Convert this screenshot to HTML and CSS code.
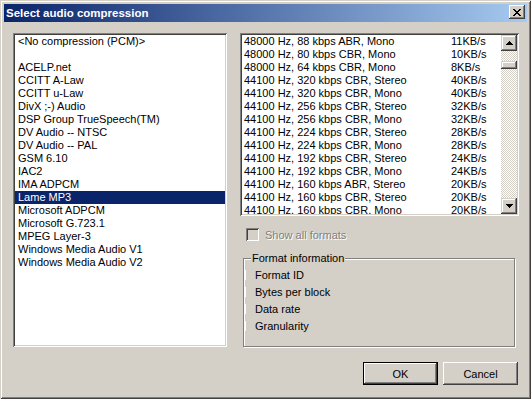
FILE: index.html
```html
<!DOCTYPE html>
<html lang="en">
<head>
    <meta charset="UTF-8">
    <title>Select audio compression</title>
    <link rel="stylesheet" href="styles.css">
</head>
<body>
    <div class="window">
        <div class="titlebar">
            <span class="title">Select audio compression</span>
            <button class="close-btn" aria-label="Close">
                <svg width="8" height="7" viewBox="0 0 8 7" shape-rendering="crispEdges">
                    <path d="M0 0h2v1h1v1h2v-1h1v-1h2v1h-1v1h-1v1h-1v1h1v1h1v1h1v1h-2v-1h-1v-1h-2v1h-1v1h-2v-1h1v-1h1v-1h1v-1h-1v-1h-1v-1h-1z" fill="#000"/>
                </svg>
            </button>
        </div>

        <div class="client">
            <div class="main">
                <!-- codec list -->
                <div class="listbox codecs">
                    <div class="item">&lt;No compression (PCM)&gt;</div>
                    <div class="item"></div>
                    <div class="item">ACELP.net</div>
                    <div class="item">CCITT A-Law</div>
                    <div class="item">CCITT u-Law</div>
                    <div class="item">DivX ;-) Audio</div>
                    <div class="item">DSP Group TrueSpeech(TM)</div>
                    <div class="item">DV Audio -- NTSC</div>
                    <div class="item">DV Audio -- PAL</div>
                    <div class="item">GSM 6.10</div>
                    <div class="item">IAC2</div>
                    <div class="item">IMA ADPCM</div>
                    <div class="item selected">Lame MP3</div>
                    <div class="item">Microsoft ADPCM</div>
                    <div class="item">Microsoft G.723.1</div>
                    <div class="item">MPEG Layer-3</div>
                    <div class="item">Windows Media Audio V1</div>
                    <div class="item">Windows Media Audio V2</div>
                </div>

                <div class="side">
                    <!-- format list -->
                    <div class="listbox formats">
                        <div class="rows">
                            <div class="row"><span>48000 Hz, 88 kbps ABR, Mono</span><span>11KB/s</span></div>
                            <div class="row"><span>48000 Hz, 80 kbps CBR, Mono</span><span>10KB/s</span></div>
                            <div class="row"><span>48000 Hz, 64 kbps CBR, Mono</span><span>8KB/s</span></div>
                            <div class="row"><span>44100 Hz, 320 kbps CBR, Stereo</span><span>40KB/s</span></div>
                            <div class="row"><span>44100 Hz, 320 kbps CBR, Mono</span><span>40KB/s</span></div>
                            <div class="row"><span>44100 Hz, 256 kbps CBR, Stereo</span><span>32KB/s</span></div>
                            <div class="row"><span>44100 Hz, 256 kbps CBR, Mono</span><span>32KB/s</span></div>
                            <div class="row"><span>44100 Hz, 224 kbps CBR, Stereo</span><span>28KB/s</span></div>
                            <div class="row"><span>44100 Hz, 224 kbps CBR, Mono</span><span>28KB/s</span></div>
                            <div class="row"><span>44100 Hz, 192 kbps CBR, Stereo</span><span>24KB/s</span></div>
                            <div class="row"><span>44100 Hz, 192 kbps CBR, Mono</span><span>24KB/s</span></div>
                            <div class="row"><span>44100 Hz, 160 kbps ABR, Stereo</span><span>20KB/s</span></div>
                            <div class="row"><span>44100 Hz, 160 kbps CBR, Stereo</span><span>20KB/s</span></div>
                            <div class="row"><span>44100 Hz, 160 kbps CBR, Mono</span><span>20KB/s</span></div>
                        </div>
                        <div class="scrollbar">
                            <div class="scroll-btn">
                                <svg width="7" height="4" viewBox="0 0 7 4" shape-rendering="crispEdges"><path d="M3 0h1v1h1v1h1v1h1v1h-7v-1h1v-1h1v-1h1z" fill="#000"/></svg>
                            </div>
                            <div class="track"><div class="thumb"></div></div>
                            <div class="scroll-btn">
                                <svg width="7" height="4" viewBox="0 0 7 4" shape-rendering="crispEdges"><path d="M0 0h7v1h-1v1h-1v1h-1v1h-1v-1h-1v-1h-1v-1h-1z" fill="#000"/></svg>
                            </div>
                        </div>
                    </div>

                    <div class="check">
                        <span class="checkbox"></span>
                        <span class="check-label">Show all formats</span>
                    </div>

                    <fieldset class="info">
                        <legend>Format information</legend>
                        <div class="info-row">Format ID</div>
                        <div class="info-row">Bytes per block</div>
                        <div class="info-row">Data rate</div>
                        <div class="info-row">Granularity</div>
                    </fieldset>
                </div>
            </div>

            <div class="buttons">
                <button class="btn default">OK</button>
                <button class="btn">Cancel</button>
            </div>
        </div>
    </div>
</body>
</html>
```

FILE: styles.css
```css
body {
    margin: 0;
    font-family: "Liberation Sans", Arial, sans-serif;
    font-size: 11px;
    color: #000;
    background: #d4d0c8;
}
.window {
    width: 531px;
    height: 399px;
    box-sizing: border-box;
    padding: 4px;
    background: #d4d0c8;
    /* classic raised window frame */
    box-shadow: inset 1px 1px #d4d0c8, inset -1px -1px #404040,
                inset 2px 2px #fff, inset -2px -2px #808080;
}
.titlebar {
    height: 18px;
    display: flex;
    justify-content: space-between;
    align-items: flex-start;
    padding: 0 2px 0 2px;
    background: linear-gradient(to right, #0a246a, #a6caf0);
}
.title {
    color: #fff;
    font-weight: bold;
    font-size: 11.5px;
    line-height: 18px;
}
.close-btn {
    width: 16px;
    height: 14px;
    margin-top: 1px;
    padding: 0;
    border: none;
    background: #d4d0c8;
    display: flex;
    align-items: center;
    justify-content: center;
    box-shadow: inset -1px -1px #404040, inset 1px 1px #fff,
                inset -2px -2px #808080, inset 2px 2px #d4d0c8;
}
.client {
    padding: 11px 8px 0 9px;
}
.main {
    display: flex;
    gap: 13px;
    height: 314px;
}
.listbox {
    background: #fff;
    padding: 2px;
    box-sizing: border-box;
    overflow: hidden;
    /* sunken edge */
    box-shadow: inset 1px 1px #808080, inset -1px -1px #fff,
                inset 2px 2px #404040, inset -2px -2px #d4d0c8;
}
.codecs {
    width: 214px;
    height: 314px;
}
.item {
    height: 13px;
    line-height: 13px;
    padding-left: 3px;
    white-space: nowrap;
}
.item.selected {
    background: #0a246a;
    color: #fff;
}
.side {
    width: 279px;
    display: flex;
    flex-direction: column;
}
.formats {
    height: 183px;
    display: flex;
}
.rows {
    flex: 1;
    overflow: hidden;
}
.row {
    display: grid;
    grid-template-columns: 207px auto;
    height: 13px;
    line-height: 13px;
    padding-left: 2px;
    white-space: nowrap;
}
.scrollbar {
    width: 16px;
    display: flex;
    flex-direction: column;
}
.scroll-btn {
    width: 16px;
    height: 16px;
    background: #d4d0c8;
    display: flex;
    align-items: center;
    justify-content: center;
    box-shadow: inset -1px -1px #404040, inset 1px 1px #d4d0c8,
                inset -2px -2px #808080, inset 2px 2px #fff;
}
.track {
    flex: 1;
    background: repeating-conic-gradient(#fff 0 25%, #d4d0c8 0 50%) 0 0 / 2px 2px;
}
.thumb {
    height: 8px;
    margin-top: 10px;
    background: #d4d0c8;
    box-shadow: inset -1px -1px #404040, inset 1px 1px #d4d0c8,
                inset -2px -2px #808080, inset 2px 2px #fff;
}
.check {
    display: flex;
    align-items: center;
    gap: 6px;
    margin: 12px 0 0 6px;
    height: 13px;
}
.checkbox {
    width: 13px;
    height: 13px;
    box-sizing: border-box;
    background: #d4d0c8;
    box-shadow: inset 1px 1px #808080, inset -1px -1px #fff,
                inset 2px 2px #404040, inset -2px -2px #d4d0c8;
}
.check-label {
    color: #808080;
    text-shadow: 1px 1px #fff;
}
.info {
    flex: 1;
    margin: 11px 4px 0 3px;
    padding: 0;
    border: 1px solid #808080;
    /* etched look */
    box-shadow: inset 1px 1px #fff, 1px 1px #fff;
    min-width: 0;
}
.info legend {
    margin-left: 7px;
    padding: 0 1px;
    line-height: 13px;
    background: #d4d0c8;
}
.info-row {
    height: 10px;
    line-height: 10px;
    margin: 7px 0 0 1px;
    padding-left: 9px;
    border-left: 1px solid #fff;
}
.info-row:first-of-type {
    margin-top: 5px;
}
.buttons {
    display: flex;
    justify-content: flex-end;
    gap: 5px;
    margin-top: 15px;
    padding-right: 1px;
}
.btn {
    width: 75px;
    height: 23px;
    padding: 0;
    border: none;
    background: #d4d0c8;
    font-family: "Liberation Sans", Arial, sans-serif;
    font-size: 11px;
    color: #000;
    box-shadow: inset -1px -1px #404040, inset 1px 1px #fff,
                inset -2px -2px #808080, inset 2px 2px #d4d0c8;
}
.btn.default {
    border: 1px solid #000;
}
```
